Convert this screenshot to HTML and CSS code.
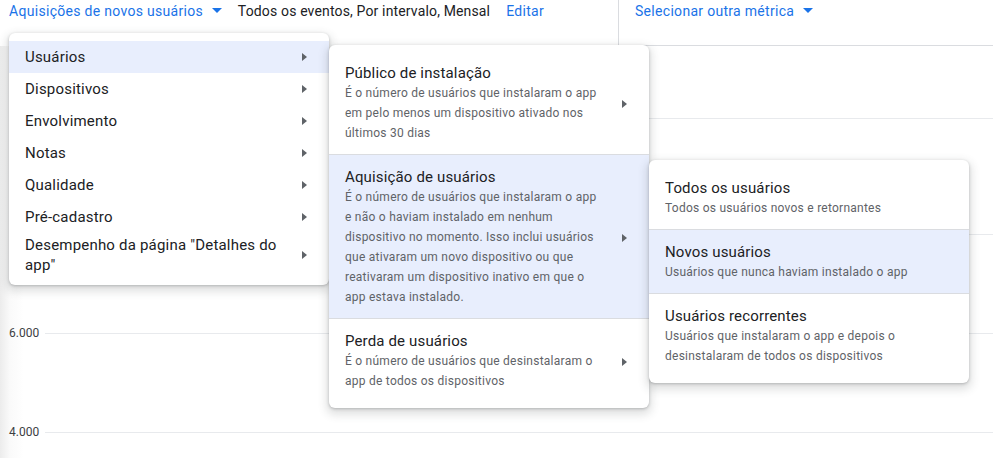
FILE: index.html
```html
<!DOCTYPE html>
<html lang="pt-BR">
<head>
    <meta charset="UTF-8">
    <meta name="viewport" content="width=device-width, initial-scale=1.0">
    <title>Aquisições de novos usuários</title>
    <link rel="stylesheet" href="styles.css">
</head>
<body>

    <div class="page">
        <header class="toolbar">
            <div class="toolbar-main">
                <a class="picker">Aquisições de novos usuários <span class="caret"></span></a>
                <span class="summary">Todos os eventos, Por intervalo, Mensal</span>
                <a class="link">Editar</a>
            </div>
            <div class="toolbar-side">
                <a class="picker">Selecionar outra métrica <span class="caret"></span></a>
            </div>
        </header>

        <div class="chart">
            <div class="grid-row"><span class="grid-label"></span><span class="grid-line"></span></div>
            <div class="grid-row row-wide"><span class="grid-label">8.000</span><span class="grid-line"></span></div>
            <div class="grid-row"><span class="grid-label">6.000</span><span class="grid-line"></span></div>
            <div class="grid-row"><span class="grid-label">4.000</span><span class="grid-line"></span></div>
        </div>

        <!-- menu em cascata: categoria > métrica > variante -->
        <ul class="menu menu-main">
            <li class="menu-item active"><span>Usuários</span><span class="chevron"></span></li>
            <li class="menu-item"><span>Dispositivos</span><span class="chevron"></span></li>
            <li class="menu-item"><span>Envolvimento</span><span class="chevron"></span></li>
            <li class="menu-item"><span>Notas</span><span class="chevron"></span></li>
            <li class="menu-item"><span>Qualidade</span><span class="chevron"></span></li>
            <li class="menu-item"><span>Pré-cadastro</span><span class="chevron"></span></li>
            <li class="menu-item"><span class="menu-text">Desempenho da página "Detalhes do app"</span><span class="chevron"></span></li>
        </ul>

        <ul class="menu menu-sub">
            <li class="option">
                <div class="option-text">
                    <div class="option-title">Público de instalação</div>
                    <div class="option-desc">É o número de usuários que instalaram o app em pelo menos um dispositivo ativado nos últimos 30 dias</div>
                </div>
                <span class="chevron"></span>
            </li>
            <li class="option active">
                <div class="option-text">
                    <div class="option-title">Aquisição de usuários</div>
                    <div class="option-desc">É o número de usuários que instalaram o app e não o haviam instalado em nenhum dispositivo no momento. Isso inclui usuários que ativaram um novo dispositivo ou que reativaram um dispositivo inativo em que o app estava instalado.</div>
                </div>
                <span class="chevron"></span>
            </li>
            <li class="option">
                <div class="option-text">
                    <div class="option-title">Perda de usuários</div>
                    <div class="option-desc">É o número de usuários que desinstalaram o app de todos os dispositivos</div>
                </div>
                <span class="chevron"></span>
            </li>
        </ul>

        <ul class="menu menu-leaf">
            <li class="option">
                <div class="option-text">
                    <div class="option-title">Todos os usuários</div>
                    <div class="option-desc">Todos os usuários novos e retornantes</div>
                </div>
            </li>
            <li class="option active">
                <div class="option-text">
                    <div class="option-title">Novos usuários</div>
                    <div class="option-desc">Usuários que nunca haviam instalado o app</div>
                </div>
            </li>
            <li class="option">
                <div class="option-text">
                    <div class="option-title">Usuários recorrentes</div>
                    <div class="option-desc">Usuários que instalaram o app e depois o desinstalaram de todos os dispositivos</div>
                </div>
            </li>
        </ul>
    </div>

</body>
</html>
```

FILE: styles.css
```css
:root {
    --blue: #1a73e8;
    --text: #202124;
    --muted: #5f6368;
    --divider: #dadce0;
    --grid: #e8eaed;
    --hover: #e8eefd;
}
body {
    margin: 0;
    font-family: Roboto, "Liberation Sans", Arial, sans-serif;
    color: var(--text);
    background: #fff;
}
.page {
    position: relative;
    height: 458px;
    overflow: hidden;
}
.toolbar {
    display: flex;
    height: 46px;
    font-size: 14px;
    line-height: 20px;
    letter-spacing: 0.3px;
}
.toolbar-main {
    width: 618px;
    box-sizing: border-box;
    padding: 1px 0 0 9px;
    display: flex;
    align-items: flex-start;
    gap: 16px;
}
.toolbar-side {
    flex: 1;
    padding: 1px 0 0 16px;
    border-left: 1px solid var(--divider);
    border-bottom: 1px solid var(--divider);
}
.picker, .link {
    color: var(--blue);
    cursor: pointer;
}
.caret {
    display: inline-block;
    margin-left: 5px;
    vertical-align: middle;
    border-left: 5px solid transparent;
    border-right: 5px solid transparent;
    border-top: 5px solid var(--blue);
    position: relative;
    top: -2px;
}
.summary {
    color: var(--text);
    letter-spacing: 0.15px;
}

.chart {
    padding-top: 62px;
    background: linear-gradient(90deg, #ececec 0, #fafafa 10px, #fff 24px);
    height: 412px;
}
.grid-row {
    display: flex;
    align-items: center;
    height: 20px;
}
.grid-row + .grid-row { margin-top: 79px; }
.grid-row.row-wide { margin-top: 96px; }
.grid-label {
    width: 36px;
    padding-left: 9px;
    font-size: 12px;
    color: #3c4043;
}
.grid-line {
    flex: 1;
    border-top: 1px solid var(--grid);
}

.menu {
    position: absolute;
    width: 320px;
    margin: 0;
    padding: 6px 0;
    list-style: none;
    background: #fff;
    border-radius: 6px;
    box-shadow: 0 1px 3px rgba(60, 64, 67, 0.3), 0 4px 8px 3px rgba(60, 64, 67, 0.15);
    box-sizing: border-box;
}
.menu-main { left: 9px; top: 33px; padding: 8px 0; }
.menu-sub { left: 329px; top: 45px; }
.menu-leaf { left: 649px; top: 160px; }

.menu-item {
    display: flex;
    align-items: center;
    justify-content: space-between;
    min-height: 32px;
    padding: 2px 22px 2px 16px;
    box-sizing: border-box;
    font-size: 15px;
    line-height: 20px;
    letter-spacing: 0.2px;
}
.menu-text { width: 265px; }
.active { background: var(--hover); }

.chevron {
    flex: none;
    width: 0;
    height: 0;
    border-top: 4.5px solid transparent;
    border-bottom: 4.5px solid transparent;
    border-left: 5px solid var(--muted);
}

.option {
    display: flex;
    align-items: center;
    justify-content: space-between;
    padding: 13px 22px 11px 16px;
}
.option + .option { border-top: 1px solid var(--divider); }
.option-text { width: 256px; }
.menu-leaf .option-text { width: 288px; }
.option-title {
    font-size: 15px;
    line-height: 19px;
    letter-spacing: 0.15px;
}
.option-desc {
    font-size: 12px;
    line-height: 20px;
    letter-spacing: 0.25px;
    color: var(--muted);
}
```
